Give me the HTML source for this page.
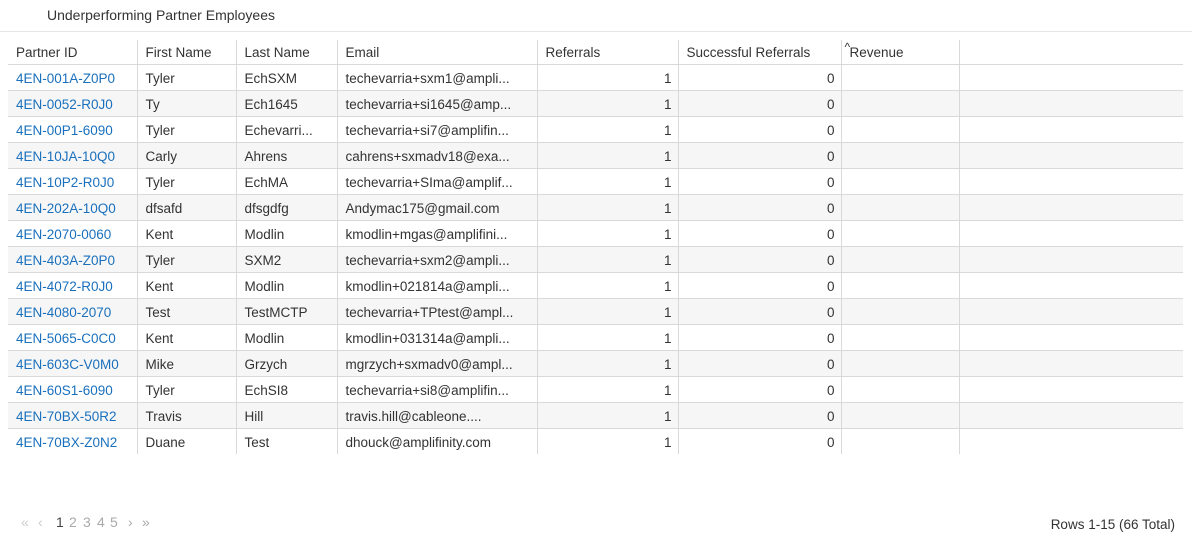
<!DOCTYPE html>
<html><head><style>
body{margin:0;width:1192px;height:544px;background:#fff;font-family:"Liberation Sans",sans-serif;font-size:13.5px;color:#333;position:relative;overflow:hidden}
.title{position:absolute;left:47px;top:7px;font-size:14px;color:#333}
.hr{position:absolute;left:0;top:31px;width:1192px;height:1px;background:#e6e6e6}
table{position:absolute;left:8px;top:40px;border-collapse:collapse;table-layout:fixed;width:1175px}
td,th{padding:0 8px;white-space:nowrap;overflow:hidden;font-weight:normal;text-align:left}
th{height:23px;border-bottom:1px solid #d9d9d9;border-right:1px solid #d9d9d9;padding-top:1px}
td{height:24px;border-bottom:1px solid #d9d9d9;border-right:1px solid #d9d9d9;padding-top:1px}
th:last-child,td:last-child{border-right:none}
tr:nth-child(odd) td{background:#f6f6f6}
tr:last-child td{border-bottom:none}
td.n{text-align:right;padding-right:6px}
a{color:#1a70bd;text-decoration:none}
.pg span{position:absolute;top:514px;color:#aaa;font-size:14px}
.rows{position:absolute;right:17px;top:517px;color:#333}
</style></head><body>
<div class="title">Underperforming Partner Employees</div>
<div class="hr"></div>
<table>
<colgroup><col style="width:129px"><col style="width:99px"><col style="width:101px"><col style="width:200px"><col style="width:141px"><col style="width:163px"><col style="width:118px"><col></colgroup>
<tr><th>Partner ID</th><th>First Name</th><th>Last Name</th><th>Email</th><th>Referrals</th><th>Successful Referrals</th><th style="position:relative"><span style="position:absolute;left:3px;top:0px;font-size:12px">^</span>Revenue</th><th></th></tr>
<tr><td><a>4EN-001A-Z0P0</a></td><td>Tyler</td><td>EchSXM</td><td>techevarria+sxm1@ampli...</td><td class="n">1</td><td class="n">0</td><td></td><td></td></tr>
<tr><td><a>4EN-0052-R0J0</a></td><td>Ty</td><td>Ech1645</td><td>techevarria+si1645@amp...</td><td class="n">1</td><td class="n">0</td><td></td><td></td></tr>
<tr><td><a>4EN-00P1-6090</a></td><td>Tyler</td><td>Echevarri...</td><td>techevarria+si7@amplifin...</td><td class="n">1</td><td class="n">0</td><td></td><td></td></tr>
<tr><td><a>4EN-10JA-10Q0</a></td><td>Carly</td><td>Ahrens</td><td>cahrens+sxmadv18@exa...</td><td class="n">1</td><td class="n">0</td><td></td><td></td></tr>
<tr><td><a>4EN-10P2-R0J0</a></td><td>Tyler</td><td>EchMA</td><td>techevarria+SIma@amplif...</td><td class="n">1</td><td class="n">0</td><td></td><td></td></tr>
<tr><td><a>4EN-202A-10Q0</a></td><td>dfsafd</td><td>dfsgdfg</td><td>Andymac175@gmail.com</td><td class="n">1</td><td class="n">0</td><td></td><td></td></tr>
<tr><td><a>4EN-2070-0060</a></td><td>Kent</td><td>Modlin</td><td>kmodlin+mgas@amplifini...</td><td class="n">1</td><td class="n">0</td><td></td><td></td></tr>
<tr><td><a>4EN-403A-Z0P0</a></td><td>Tyler</td><td>SXM2</td><td>techevarria+sxm2@ampli...</td><td class="n">1</td><td class="n">0</td><td></td><td></td></tr>
<tr><td><a>4EN-4072-R0J0</a></td><td>Kent</td><td>Modlin</td><td>kmodlin+021814a@ampli...</td><td class="n">1</td><td class="n">0</td><td></td><td></td></tr>
<tr><td><a>4EN-4080-2070</a></td><td>Test</td><td>TestMCTP</td><td>techevarria+TPtest@ampl...</td><td class="n">1</td><td class="n">0</td><td></td><td></td></tr>
<tr><td><a>4EN-5065-C0C0</a></td><td>Kent</td><td>Modlin</td><td>kmodlin+031314a@ampli...</td><td class="n">1</td><td class="n">0</td><td></td><td></td></tr>
<tr><td><a>4EN-603C-V0M0</a></td><td>Mike</td><td>Grzych</td><td>mgrzych+sxmadv0@ampl...</td><td class="n">1</td><td class="n">0</td><td></td><td></td></tr>
<tr><td><a>4EN-60S1-6090</a></td><td>Tyler</td><td>EchSI8</td><td>techevarria+si8@amplifin...</td><td class="n">1</td><td class="n">0</td><td></td><td></td></tr>
<tr><td><a>4EN-70BX-50R2</a></td><td>Travis</td><td>Hill</td><td>travis.hill@cableone....</td><td class="n">1</td><td class="n">0</td><td></td><td></td></tr>
<tr><td><a>4EN-70BX-Z0N2</a></td><td>Duane</td><td>Test</td><td>dhouck@amplifinity.com</td><td class="n">1</td><td class="n">0</td><td></td><td></td></tr>
</table>
<div class="pg">
<span style="left:21px;color:#ccc">«</span><span style="left:38px;color:#ccc">‹</span>
<span style="left:56px;color:#444">1</span><span style="left:69px">2</span><span style="left:83px">3</span><span style="left:97px">4</span><span style="left:110px">5</span>
<span style="left:128px">›</span><span style="left:142px">»</span>
</div>
<div class="rows">Rows 1-15 (66 Total)</div>
</body></html>
